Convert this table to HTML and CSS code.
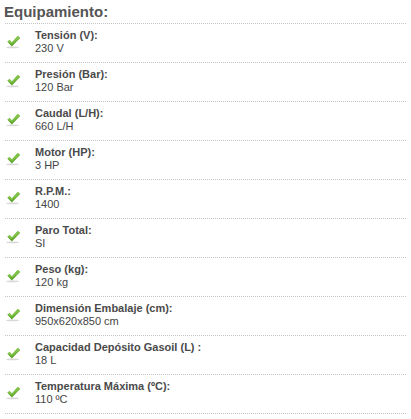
FILE: index.html
```html
<!DOCTYPE html>
<html lang="es">
<head>
<meta charset="utf-8">
<title>Equipamiento</title>
<link rel="stylesheet" href="styles.css">
</head>
<body>
<div class="specs">
  <h2 class="title">Equipamiento:</h2>
  <ul class="list">
    <li class="row"><svg class="check" viewBox="0 0 16 14"><ellipse cx="7" cy="12.8" rx="7" ry="0.9" fill="#d8d8d8"/><path d="M1.5 6.8 L3.8 4.8 L6.2 7.6 L12.6 0.6 L15 2.6 L6.2 11.8 Z" fill="#5ea52b"/><path d="M1.5 6.8 L3.8 4.8 L6.2 7.6 L12.6 0.6 L15 2.6 L6.2 9.2 Z" fill="#80c447"/></svg><div class="text"><div class="label">Tensión (V):</div><div class="value">230 V</div></div></li>
    <li class="row"><svg class="check" viewBox="0 0 16 14"><ellipse cx="7" cy="12.8" rx="7" ry="0.9" fill="#d8d8d8"/><path d="M1.5 6.8 L3.8 4.8 L6.2 7.6 L12.6 0.6 L15 2.6 L6.2 11.8 Z" fill="#5ea52b"/><path d="M1.5 6.8 L3.8 4.8 L6.2 7.6 L12.6 0.6 L15 2.6 L6.2 9.2 Z" fill="#80c447"/></svg><div class="text"><div class="label">Presión (Bar):</div><div class="value">120 Bar</div></div></li>
    <li class="row"><svg class="check" viewBox="0 0 16 14"><ellipse cx="7" cy="12.8" rx="7" ry="0.9" fill="#d8d8d8"/><path d="M1.5 6.8 L3.8 4.8 L6.2 7.6 L12.6 0.6 L15 2.6 L6.2 11.8 Z" fill="#5ea52b"/><path d="M1.5 6.8 L3.8 4.8 L6.2 7.6 L12.6 0.6 L15 2.6 L6.2 9.2 Z" fill="#80c447"/></svg><div class="text"><div class="label">Caudal (L/H):</div><div class="value">660 L/H</div></div></li>
    <li class="row"><svg class="check" viewBox="0 0 16 14"><ellipse cx="7" cy="12.8" rx="7" ry="0.9" fill="#d8d8d8"/><path d="M1.5 6.8 L3.8 4.8 L6.2 7.6 L12.6 0.6 L15 2.6 L6.2 11.8 Z" fill="#5ea52b"/><path d="M1.5 6.8 L3.8 4.8 L6.2 7.6 L12.6 0.6 L15 2.6 L6.2 9.2 Z" fill="#80c447"/></svg><div class="text"><div class="label">Motor (HP):</div><div class="value">3 HP</div></div></li>
    <li class="row"><svg class="check" viewBox="0 0 16 14"><ellipse cx="7" cy="12.8" rx="7" ry="0.9" fill="#d8d8d8"/><path d="M1.5 6.8 L3.8 4.8 L6.2 7.6 L12.6 0.6 L15 2.6 L6.2 11.8 Z" fill="#5ea52b"/><path d="M1.5 6.8 L3.8 4.8 L6.2 7.6 L12.6 0.6 L15 2.6 L6.2 9.2 Z" fill="#80c447"/></svg><div class="text"><div class="label">R.P.M.:</div><div class="value">1400</div></div></li>
    <li class="row"><svg class="check" viewBox="0 0 16 14"><ellipse cx="7" cy="12.8" rx="7" ry="0.9" fill="#d8d8d8"/><path d="M1.5 6.8 L3.8 4.8 L6.2 7.6 L12.6 0.6 L15 2.6 L6.2 11.8 Z" fill="#5ea52b"/><path d="M1.5 6.8 L3.8 4.8 L6.2 7.6 L12.6 0.6 L15 2.6 L6.2 9.2 Z" fill="#80c447"/></svg><div class="text"><div class="label">Paro Total:</div><div class="value">SI</div></div></li>
    <li class="row"><svg class="check" viewBox="0 0 16 14"><ellipse cx="7" cy="12.8" rx="7" ry="0.9" fill="#d8d8d8"/><path d="M1.5 6.8 L3.8 4.8 L6.2 7.6 L12.6 0.6 L15 2.6 L6.2 11.8 Z" fill="#5ea52b"/><path d="M1.5 6.8 L3.8 4.8 L6.2 7.6 L12.6 0.6 L15 2.6 L6.2 9.2 Z" fill="#80c447"/></svg><div class="text"><div class="label">Peso (kg):</div><div class="value">120 kg</div></div></li>
    <li class="row"><svg class="check" viewBox="0 0 16 14"><ellipse cx="7" cy="12.8" rx="7" ry="0.9" fill="#d8d8d8"/><path d="M1.5 6.8 L3.8 4.8 L6.2 7.6 L12.6 0.6 L15 2.6 L6.2 11.8 Z" fill="#5ea52b"/><path d="M1.5 6.8 L3.8 4.8 L6.2 7.6 L12.6 0.6 L15 2.6 L6.2 9.2 Z" fill="#80c447"/></svg><div class="text"><div class="label">Dimensión Embalaje (cm):</div><div class="value">950x620x850 cm</div></div></li>
    <li class="row"><svg class="check" viewBox="0 0 16 14"><ellipse cx="7" cy="12.8" rx="7" ry="0.9" fill="#d8d8d8"/><path d="M1.5 6.8 L3.8 4.8 L6.2 7.6 L12.6 0.6 L15 2.6 L6.2 11.8 Z" fill="#5ea52b"/><path d="M1.5 6.8 L3.8 4.8 L6.2 7.6 L12.6 0.6 L15 2.6 L6.2 9.2 Z" fill="#80c447"/></svg><div class="text"><div class="label">Capacidad Depósito Gasoil (L) :</div><div class="value">18 L</div></div></li>
    <li class="row"><svg class="check" viewBox="0 0 16 14"><ellipse cx="7" cy="12.8" rx="7" ry="0.9" fill="#d8d8d8"/><path d="M1.5 6.8 L3.8 4.8 L6.2 7.6 L12.6 0.6 L15 2.6 L6.2 11.8 Z" fill="#5ea52b"/><path d="M1.5 6.8 L3.8 4.8 L6.2 7.6 L12.6 0.6 L15 2.6 L6.2 9.2 Z" fill="#80c447"/></svg><div class="text"><div class="label">Temperatura Máxima (ºC):</div><div class="value">110 ºC</div></div></li>
  </ul>
</div>
</body>
</html>
```
FILE: styles.css
```css
html, body {
  margin: 0;
  padding: 0;
  background: #fff;
}
body {
  font-family: "Liberation Sans", Arial, sans-serif;
  color: #444;
}
.specs {
  width: 406px;
}
.title {
  margin: 0;
  padding: 2px 0 0 4px;
  font-size: 15px;
  line-height: 20px;
  font-weight: bold;
  color: #555;
}
.list {
  list-style: none;
  margin: 1px 0 0 5px;
  padding: 0;
  border-top: 1px dotted #c4c4c4;
}
.row {
  display: flex;
  align-items: center;
  padding: 5px 0 7px;
  border-bottom: 1px dotted #c4c4c4;
}
.check {
  width: 15px;
  height: 14px;
  margin: 0 14px 0 1px;
  flex: none;
}
.text {
  font-size: 11px;
  line-height: 13px;
}
.label {
  font-weight: bold;
  color: #4a4a4a;
}
.value {
  color: #444;
}
```
